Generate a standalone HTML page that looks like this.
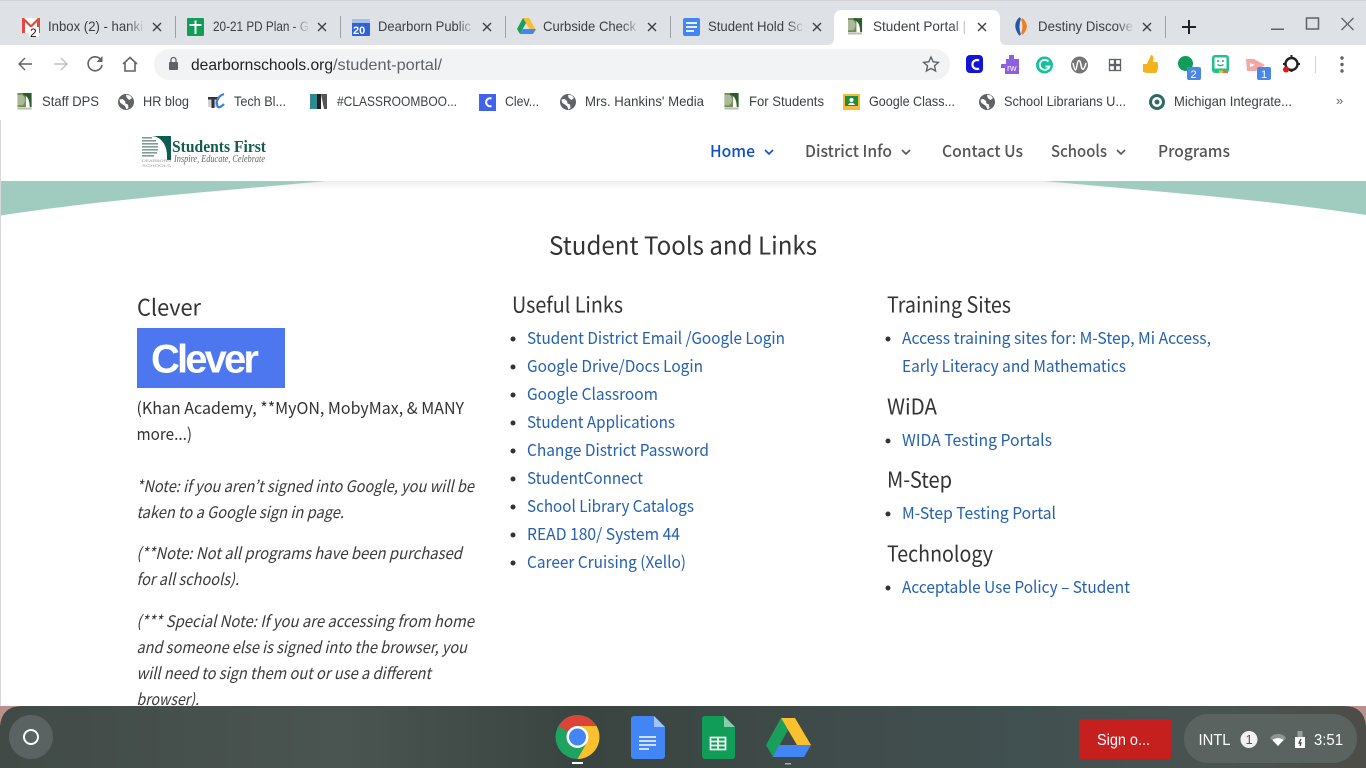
<!DOCTYPE html>
<html lang="en"><head><meta charset="utf-8"><title>Student Portal</title>
<style>
html,body{margin:0;padding:0;width:1366px;height:768px;overflow:hidden;background:#fff}
svg{display:block}
text{white-space:pre}
.ui{font-family:"Liberation Sans",sans-serif;font-size:14px;fill:#3c4043}
.pg{font-family:"Noto Sans CJK JP","Liberation Sans",sans-serif;font-size:16.5px;fill:#333}
.lk{fill:#2561ad}
.it{font-style:italic;font-size:16px;fill:#3a3a3a}
.h{font-size:21.5px;fill:#333}
.nav{font-size:16.5px;font-weight:500;fill:#555}
</style></head><body>
<svg width="1366" height="768" viewBox="0 0 1366 768" xmlns="http://www.w3.org/2000/svg">
<defs>
<linearGradient id="fade"><stop offset="0" stop-color="#dee1e6" stop-opacity="0"/><stop offset="1" stop-color="#dee1e6"/></linearGradient>
<linearGradient id="fadew"><stop offset="0" stop-color="#fff" stop-opacity="0"/><stop offset="1" stop-color="#fff"/></linearGradient>
<linearGradient id="bar" x1="0" x2="1" y1="0" y2="0"><stop offset="0" stop-color="#414a46"/><stop offset=".25" stop-color="#4a5450"/><stop offset=".42" stop-color="#3a4440"/><stop offset=".6" stop-color="#3f4b4a"/><stop offset=".75" stop-color="#415050"/><stop offset=".9" stop-color="#4a5350"/><stop offset="1" stop-color="#4c4c48"/></linearGradient>
<linearGradient id="hs" x1="0" y1="0" x2="0" y2="1"><stop offset="0" stop-color="#000" stop-opacity=".07"/><stop offset="1" stop-color="#000" stop-opacity="0"/></linearGradient>
<symbol id="globe" viewBox="0 0 16 16"><circle cx="8" cy="8" r="8" fill="#5f6368"/><path d="M1.500 5.500 4.500 5 7 7 7.500 9.500 10 10.500 10.500 14 8.500 15.500 7 12 4 10 2 8.500ZM8 .8 12 1.500 14 4 11.500 6 10 5 8.500 3.500Z" fill="#fff"/></symbol>
<symbol id="dps" viewBox="0 0 16 18"><rect width="16" height="18" fill="#fff"/><rect x="0" y="0" width="9" height="15" fill="#6f9150"/><path d="M6 0h9v15h-2C13 8 11 3 6 2Z" fill="#2b5e2c"/><path d="M0 2h5c4 2 4 9 0 11H0Z" fill="#a9b99a"/><rect y="15.500" width="15" height="2" fill="#bbb"/></symbol>
<symbol id="x" viewBox="0 0 10 10"><path d="M1 1l8 8M9 1l-8 8" stroke="#3c4043" stroke-width="1.400" fill="none"/></symbol>
<symbol id="caret" viewBox="0 0 10 6"><path d="M1 1l4 4 4-4" stroke="#555" stroke-width="1.600" fill="none"/></symbol>
</defs>

<!-- Tab strip -->
<rect width="1366" height="45" fill="#dee1e6"/>
<rect width="1366" height="1" fill="#d0d2d6"/>
<path d="M827 45c5 0 7-2 7-7V18c0-5 3-8 8-8h150c5 0 8 3 8 8v20c0 5 2 7 7 7Z" fill="#fff"/>
<g fill="#9aa0a6"><rect x="175" y="16" width="1" height="22"/><rect x="340" y="16" width="1" height="22"/><rect x="505" y="16" width="1" height="22"/><rect x="670" y="16" width="1" height="22"/><rect x="1165" y="16" width="1" height="22"/></g>

<text class="ui" x="48" y="31" textLength="95" lengthAdjust="spacingAndGlyphs">Inbox (2) - hanki</text>
<text class="ui" x="213" y="31" textLength="96" lengthAdjust="spacingAndGlyphs">20-21 PD Plan - G</text>
<text class="ui" x="378" y="31" textLength="93" lengthAdjust="spacingAndGlyphs">Dearborn Public</text>
<text class="ui" x="543" y="31" textLength="93" lengthAdjust="spacingAndGlyphs">Curbside Check</text>
<text class="ui" x="708" y="31" textLength="95" lengthAdjust="spacingAndGlyphs">Student Hold Sc</text>
<text class="ui" x="873" y="31" textLength="93" lengthAdjust="spacingAndGlyphs">Student Portal |</text>
<text class="ui" x="1038" y="31" textLength="95" lengthAdjust="spacingAndGlyphs">Destiny Discove</text>
<rect x="127" y="15" width="18" height="22" fill="url(#fade)"/><rect x="292" y="15" width="18" height="22" fill="url(#fade)"/><rect x="457" y="15" width="18" height="22" fill="url(#fade)"/><rect x="622" y="15" width="18" height="22" fill="url(#fade)"/><rect x="787" y="15" width="18" height="22" fill="url(#fade)"/><rect x="952" y="15" width="18" height="22" fill="url(#fadew)"/><rect x="1117" y="15" width="18" height="22" fill="url(#fade)"/>
<g><use href="#x" x="152" y="22" width="10" height="10"/><use href="#x" x="317" y="22" width="10" height="10"/><use href="#x" x="482" y="22" width="10" height="10"/><use href="#x" x="647" y="22" width="10" height="10"/><use href="#x" x="812" y="22" width="10" height="10"/><use href="#x" x="977" y="22" width="10" height="10"/><use href="#x" x="1142" y="22" width="10" height="10"/></g>

<!-- tab favicons -->
<rect x="22" y="18" width="18" height="15" fill="#e04a3f"/><path d="M25 33V22l6 6 6-6v11Z" fill="#fff"/><path d="M24 18l7 7 7-7Z" fill="#fff"/><path d="M22 18l9 9 9-9h-2l-7 7-7-7Z" fill="#e04a3f"/>
<rect x="29" y="27" width="10" height="10" fill="#fff"/><text x="30" y="37" font-family="Liberation Sans" font-size="12" fill="#111">2</text>
<rect x="187" y="18" width="17" height="18" rx="1" fill="#0f9d58"/><path d="M195.500 20.500v13.500M189.500 25h12" stroke="#fff" stroke-width="2"/>
<rect x="352" y="19" width="18" height="17" rx="1" fill="#2f62d9"/><rect x="352" y="19" width="18" height="4" fill="#a9bfe8"/><text x="353" y="34" font-family="Liberation Sans" font-size="11" font-weight="700" fill="#fff">20</text>
<path d="M523 18h6l7 12h-6Z" fill="#f5bd2f"/><path d="M523 18l-6 11 3 5 6-11Z" fill="#1a9e5b"/><path d="M520 34h13l3-5h-13Z" fill="#4285f4"/>
<rect x="683" y="18" width="17" height="18" rx="2" fill="#4285f4"/><path d="M686 23h11M686 27h11M686 31h8" stroke="#fff" stroke-width="1.800"/>
<use href="#dps" x="848" y="18" width="15" height="17"/>
<path d="M1020 18c-5 5-5 10 0 17-2-5-2-11 0-17Z" fill="#2456a6" stroke="#2456a6" stroke-width="2"/><path d="M1022 19c5 5 5 10 0 15 2-5 2-10 0-15Z" fill="#ef7d1a" stroke="#ef7d1a" stroke-width="2"/>

<!-- plus / window controls -->
<path d="M1189 20v14M1182 27h14" stroke="#222" stroke-width="2"/>
<rect x="1271" y="28.500" width="13" height="1.500" fill="#5f6368"/>
<rect x="1306.500" y="18" width="12" height="11" fill="none" stroke="#5f6368" stroke-width="1.500"/>
<path d="M1341.500 18l12 12M1353.500 18l-12 12" stroke="#5f6368" stroke-width="1.300"/>

<!-- toolbar -->
<rect y="45" width="1366" height="75" fill="#fff"/>
<path d="M32 64H19M25 58l-6 6 6 6" stroke="#5f6368" stroke-width="1.400" fill="none"/>
<path d="M67 64H54M61 58l6 6-6 6" stroke="#bdc1c6" stroke-width="1.400" fill="none"/>
<path d="M101 60a7 7 0 1 0 1 5" stroke="#5f6368" stroke-width="1.600" fill="none"/><path d="M102.500 56v6h-6Z" fill="#5f6368"/>
<path d="M123 64l7-6.500 7 6.500M125 63v8h10v-8" stroke="#5f6368" stroke-width="1.600" fill="none"/>
<rect x="154" y="49" width="796" height="31" rx="15.500" fill="#f1f3f4"/>
<rect x="169" y="62" width="9" height="8" rx="1" fill="#5f6368"/><path d="M171 62v-2a2.500 2.500 0 0 1 5 0v2" stroke="#5f6368" stroke-width="1.300" fill="none"/>
<text x="191" y="70" font-family="Liberation Sans" font-size="16" fill="#202124" textLength="142" lengthAdjust="spacingAndGlyphs">dearbornschools.org</text>
<text x="333" y="70" font-family="Liberation Sans" font-size="16" fill="#5f6368" textLength="109" lengthAdjust="spacingAndGlyphs">/student-portal/</text>
<path d="M931 57l2.200 4.800 5.200.6-3.900 3.500 1.100 5.100-4.600-2.600-4.600 2.600 1.100-5.100-3.900-3.500 5.200-.6Z" fill="none" stroke="#5f6368" stroke-width="1.400"/>

<!-- extensions -->
<rect x="966" y="55" width="17" height="18" rx="4" fill="#1414d8"/><path d="M979 60.500a4.500 4.500 0 1 0 0 8" stroke="#fff" stroke-width="2.200" fill="none"/>
<path d="M1006 59h3v-4h5v4h5v15h-14v-6h-4v-4h5Z" fill="#8e5fe0"/><text x="1007" y="71" font-family="Liberation Sans" font-size="9" fill="#fff">rw</text>
<circle cx="1044.500" cy="65" r="8.500" fill="#15c39a"/><path d="M1048.500 61.500a5 5 0 1 0 1 5h-4" stroke="#fff" stroke-width="1.800" fill="none"/>
<circle cx="1079.500" cy="65" r="8.500" fill="#757575"/><path d="M1073 63c2 10 3 8 4 2s3-6 4 0 3 6 5-2" stroke="#fff" stroke-width="1.500" fill="none"/>
<g fill="none" stroke="#5f6368" stroke-width="1.300"><rect x="1109.500" y="59.500" width="5" height="5"/><rect x="1115.500" y="59.500" width="5" height="5"/><rect x="1109.500" y="65.500" width="5" height="5"/><rect x="1115.500" y="65.500" width="5" height="5"/></g>
<path d="M1143 64h4l4-9c3 0 3 4 2 7h4c2 1 1 10-1 11h-9l-4-1Z" fill="#f5b21f"/>
<circle cx="1185.500" cy="63.500" r="7.500" fill="#0f9d58"/><rect x="1187" y="67" width="14" height="13" rx="2" fill="#4a86e8"/><text x="1190.500" y="78" font-family="Liberation Sans" font-size="11" fill="#fff">2</text>
<rect x="1212" y="55" width="17" height="18" rx="3" fill="#1ec28b"/><rect x="1214.500" y="57.500" width="12" height="11" fill="#fff"/><circle cx="1218" cy="61" r="1" fill="#1a8"/><circle cx="1223" cy="61" r="1" fill="#1a8"/><path d="M1217.500 64.500c2 1.500 4 1.500 6 0" stroke="#1a8" stroke-width="1.300" fill="none"/><rect x="1219" y="70.500" width="4" height="2.500" fill="#f5bd2f"/><rect x="1223" y="70.500" width="5" height="2.500" fill="#ef6c3a"/>
<path d="M1246 59h8l11 6-9 6h-9Z" fill="#f4a7a7"/><path d="M1250 63l5 2-5 2Z" fill="#fff"/><rect x="1257" y="67" width="14" height="13" rx="2" fill="#4a86e8"/><text x="1261" y="78" font-family="Liberation Sans" font-size="11" fill="#fff">1</text>
<circle cx="1291.500" cy="64" r="6" fill="none" stroke="#222" stroke-width="2.400"/><path d="M1291.500 55v4M1291.500 69v3M1283 64h3M1297 64h3" stroke="#222" stroke-width="2"/><circle cx="1286" cy="69.500" r="3" fill="#ee1111"/>
<rect x="1315" y="56" width="1" height="17" fill="#d0d2d6"/>
<g fill="#5f6368"><circle cx="1342" cy="58" r="1.700"/><circle cx="1342" cy="64.500" r="1.700"/><circle cx="1342" cy="71" r="1.700"/></g>

<!-- bookmarks -->
<g>
<use href="#dps" x="17" y="93" width="16" height="17"/>
<text class="ui" x="42" y="106" textLength="57" lengthAdjust="spacingAndGlyphs">Staff DPS</text>
<use href="#globe" x="118" y="94" width="16" height="16"/>
<text class="ui" x="143" y="106" textLength="46" lengthAdjust="spacingAndGlyphs">HR blog</text>
<rect x="208" y="97" width="10" height="10" fill="#cfd2d6"/><path d="M208 97h10v2.500h-3.500V108h-3V99.500H208Z" fill="#333"/><path d="M224 94c-6 2-9 8-6 13 2 1 4-1 6-3" fill="none" stroke="#3f7fdc" stroke-width="2.200"/>
<text class="ui" x="234" y="106" textLength="52" lengthAdjust="spacingAndGlyphs">Tech Bl...</text>
<rect x="310" y="94" width="7" height="15" fill="#2f8a90"/><rect x="317" y="94" width="4" height="15" fill="#222"/><path d="M321 94l3 15h3V94Z" fill="#555"/>
<text class="ui" x="337" y="106" textLength="120" lengthAdjust="spacingAndGlyphs">#CLASSROOMBOO...</text>
<rect x="479" y="94" width="17" height="17" fill="#4264ea"/><path d="M491.500 98.500a4 4 0 1 0 0 7.500" stroke="#fff" stroke-width="2" fill="none"/>
<text class="ui" x="505" y="106" textLength="34" lengthAdjust="spacingAndGlyphs">Clev...</text>
<use href="#globe" x="560" y="94" width="16" height="16"/>
<text class="ui" x="585" y="106" textLength="119" lengthAdjust="spacingAndGlyphs">Mrs. Hankins' Media</text>
<use href="#dps" x="724" y="93" width="16" height="17"/>
<text class="ui" x="749" y="106" textLength="75" lengthAdjust="spacingAndGlyphs">For Students</text>
<rect x="843" y="94" width="17" height="16" fill="#f5bd2f"/><rect x="845" y="96" width="13" height="10" fill="#1e8e3e"/><circle cx="851.500" cy="100" r="2" fill="#fff"/><path d="M848 105c1-3 6-3 7 0Z" fill="#fff"/>
<text class="ui" x="869" y="106" textLength="86" lengthAdjust="spacingAndGlyphs">Google Class...</text>
<use href="#globe" x="979" y="94" width="16" height="16"/>
<text class="ui" x="1004" y="106" textLength="122" lengthAdjust="spacingAndGlyphs">School Librarians U...</text>
<circle cx="1157" cy="102" r="6.500" fill="none" stroke="#2f6b66" stroke-width="3"/><circle cx="1157" cy="102" r="2.500" fill="#2f6b66"/>
<text class="ui" x="1174" y="106" textLength="118" lengthAdjust="spacingAndGlyphs">Michigan Integrate...</text>
<text x="1336" y="105" font-family="Liberation Sans" font-size="13" fill="#5f6368">»</text>
</g>

<!-- page -->
<rect x="0" y="120" width="1" height="590" fill="#d8d8d8"/>
<rect x="1" y="181" width="1365" height="9" fill="url(#hs)"/>
<path d="M1 181H326C210 192 100 200 1 215.500Z" fill="#a0ccc0"/>
<path d="M1366 181H1044C1160 192 1270 200 1366 215Z" fill="#a0ccc0"/>

<!-- logo -->
<rect x="142" y="136" width="29" height="24" fill="#0e5c50"/>
<path d="M142 136h9c10 0 16 9 16 20v4h-25Z" fill="#fff"/>
<g fill="#7f9c95"><rect x="142" y="137" width="10" height="1.600"/><rect x="142" y="140" width="14" height="1.600"/><rect x="142" y="143" width="16" height="1.600"/><rect x="142" y="146" width="16" height="1.600"/><rect x="142" y="149" width="16" height="1.600"/><rect x="142" y="152" width="15" height="1.600"/><rect x="142" y="155" width="12" height="1.600"/></g>
<text x="142" y="162" font-family="Liberation Sans" font-size="4" fill="#999" textLength="29" lengthAdjust="spacingAndGlyphs">DEARBORN</text>
<text x="142" y="167" font-family="Liberation Sans" font-size="4" fill="#999" textLength="29" lengthAdjust="spacingAndGlyphs">SCHOOLS</text>
<text x="172" y="152" font-family="Liberation Serif" font-size="17" font-weight="700" fill="#135c50" textLength="94" lengthAdjust="spacingAndGlyphs">Students First</text>
<text x="174" y="162" font-family="Liberation Serif" font-size="10" font-style="italic" fill="#666" textLength="91" lengthAdjust="spacingAndGlyphs">Inspire, Educate, Celebrate</text>

<!-- nav -->
<text class="pg nav" x="710" y="157" textLength="45" lengthAdjust="spacingAndGlyphs" style="fill:#0f4fc9">Home</text>
<path d="M765 150l4 4 4-4" stroke="#0f4fc9" stroke-width="1.600" fill="none"/>
<text class="pg nav" x="805" y="157" textLength="87" lengthAdjust="spacingAndGlyphs">District Info</text>
<use href="#caret" x="901" y="149" width="10" height="6"/>
<text class="pg nav" x="942" y="157" textLength="81" lengthAdjust="spacingAndGlyphs">Contact Us</text>
<text class="pg nav" x="1051" y="157" textLength="56" lengthAdjust="spacingAndGlyphs">Schools</text>
<use href="#caret" x="1116" y="149" width="10" height="6"/>
<text class="pg nav" x="1158" y="157" textLength="72" lengthAdjust="spacingAndGlyphs">Programs</text>

<!-- content -->
<text class="pg" x="549" y="254.500" style="font-size:24.500px" textLength="268" lengthAdjust="spacingAndGlyphs">Student Tools and Links</text>

<text class="pg h" x="137" y="315.500" style="font-size:22.500px" textLength="64" lengthAdjust="spacingAndGlyphs">Clever</text>
<rect x="137" y="328" width="148" height="60" fill="#4c77ef"/>
<text x="151" y="372.500" font-family="Liberation Sans" font-size="40" font-weight="700" fill="#fff" textLength="108" lengthAdjust="spacing">Clever</text>
<text class="pg" x="136.500" y="414" textLength="327.500" lengthAdjust="spacingAndGlyphs">(Khan Academy, **MyON, MobyMax, &amp; MANY</text>
<text class="pg" x="136.500" y="440" textLength="55.500" lengthAdjust="spacingAndGlyphs">more...)</text>
<text class="pg it" x="136.500" y="492" textLength="337.500" lengthAdjust="spacingAndGlyphs">*Note: if you aren’t signed into Google, you will be</text>
<text class="pg it" x="136.500" y="518" textLength="207.500" lengthAdjust="spacingAndGlyphs">taken to a Google sign in page.</text>
<text class="pg it" x="136.500" y="559" textLength="325.500" lengthAdjust="spacingAndGlyphs">(**Note: Not all programs have been purchased</text>
<text class="pg it" x="136.500" y="585" textLength="102.500" lengthAdjust="spacingAndGlyphs">for all schools).</text>
<text class="pg it" x="136.500" y="627" textLength="337.500" lengthAdjust="spacingAndGlyphs">(*** Special Note: If you are accessing from home</text>
<text class="pg it" x="136.500" y="653" textLength="330.500" lengthAdjust="spacingAndGlyphs">and someone else is signed into the browser, you</text>
<text class="pg it" x="136.500" y="679" textLength="294.500" lengthAdjust="spacingAndGlyphs">will need to sign them out or use a different</text>
<text class="pg it" x="136.500" y="705" textLength="62.500" lengthAdjust="spacingAndGlyphs">browser).</text>

<text class="pg h" x="512" y="312.500" textLength="111" lengthAdjust="spacingAndGlyphs">Useful Links</text>
<g fill="#333"><circle cx="513" cy="339" r="2.500"/><circle cx="513" cy="367" r="2.500"/><circle cx="513" cy="395" r="2.500"/><circle cx="513" cy="423" r="2.500"/><circle cx="513" cy="451" r="2.500"/><circle cx="513" cy="479" r="2.500"/><circle cx="513" cy="507" r="2.500"/><circle cx="513" cy="535" r="2.500"/><circle cx="513" cy="563" r="2.500"/>
<circle cx="888" cy="339" r="2.500"/><circle cx="888" cy="441" r="2.500"/><circle cx="888" cy="514" r="2.500"/><circle cx="888" cy="588" r="2.500"/></g>
<text class="pg lk" x="527" y="344" textLength="258" lengthAdjust="spacingAndGlyphs">Student District Email /Google Login</text>
<text class="pg lk" x="527" y="372" textLength="176" lengthAdjust="spacingAndGlyphs">Google Drive/Docs Login</text>
<text class="pg lk" x="527" y="400" textLength="131" lengthAdjust="spacingAndGlyphs">Google Classroom</text>
<text class="pg lk" x="527" y="428" textLength="148" lengthAdjust="spacingAndGlyphs">Student Applications</text>
<text class="pg lk" x="527" y="456" textLength="182" lengthAdjust="spacingAndGlyphs">Change District Password</text>
<text class="pg lk" x="527" y="484" textLength="116" lengthAdjust="spacingAndGlyphs">StudentConnect</text>
<text class="pg lk" x="527" y="512" textLength="167" lengthAdjust="spacingAndGlyphs">School Library Catalogs</text>
<text class="pg lk" x="527" y="540" textLength="153" lengthAdjust="spacingAndGlyphs">READ 180/ System 44</text>
<text class="pg lk" x="527" y="568" textLength="159" lengthAdjust="spacingAndGlyphs">Career Cruising (Xello)</text>

<text class="pg h" x="887" y="312.500" textLength="124" lengthAdjust="spacingAndGlyphs">Training Sites</text>
<text class="pg lk" x="902" y="344" textLength="309" lengthAdjust="spacingAndGlyphs">Access training sites for: M-Step, Mi Access,</text>
<text class="pg lk" x="902" y="372" textLength="224" lengthAdjust="spacingAndGlyphs">Early Literacy and Mathematics</text>
<text class="pg h" x="887" y="414.500" textLength="50" lengthAdjust="spacingAndGlyphs">WiDA</text>
<text class="pg lk" x="902" y="446" textLength="150" lengthAdjust="spacingAndGlyphs">WIDA Testing Portals</text>
<text class="pg h" x="887" y="487.500" textLength="65" lengthAdjust="spacingAndGlyphs">M-Step</text>
<text class="pg lk" x="902" y="519" textLength="154" lengthAdjust="spacingAndGlyphs">M-Step Testing Portal</text>
<text class="pg h" x="887" y="561.500" textLength="106" lengthAdjust="spacingAndGlyphs">Technology</text>
<text class="pg lk" x="902" y="593" textLength="228" lengthAdjust="spacingAndGlyphs">Acceptable Use Policy – Student</text>

<!-- shelf -->
<rect y="706" width="1366" height="62" fill="#b9918a"/>
<path d="M0 768V726Q2 706 22 706H1344Q1364 706 1366 726V768Z" fill="url(#bar)"/>
<circle cx="31" cy="737" r="22" fill="#5a6361"/>
<circle cx="31" cy="737" r="7" fill="none" stroke="#fff" stroke-width="2"/>

<!-- chrome -->
<circle cx="577.500" cy="737" r="22" fill="#1ea362"/>
<path d="M558.500 726A22 22 0 0 1 596.500 726H577.500A11 11 0 0 0 568 731.500Z" fill="#db4437"/>
<path d="M596.500 726A22 22 0 0 1 577.500 759L587 742.500A11 11 0 0 0 587 731.500 11 11 0 0 0 577.500 726Z" fill="#fbc02d"/>
<circle cx="577.500" cy="737" r="11" fill="#fff"/><circle cx="577.500" cy="737" r="8.500" fill="#4285f4"/>
<rect x="572" y="762" width="11" height="2" fill="#fff"/>

<!-- docs -->
<path d="M634 716h20l11 11v29a3 3 0 0 1-3 3h-28a3 3 0 0 1-3-3v-37a3 3 0 0 1 3-3Z" fill="#4285f4"/>
<path d="M654 716l11 11h-11Z" fill="#a1c2fa"/>
<path d="M639 737h17M639 741h17M639 745h17M639 749h10" stroke="#fff" stroke-width="1.500"/>

<!-- sheets -->
<path d="M705 716h19l11 11v29a3 3 0 0 1-3 3h-27a3 3 0 0 1-3-3v-37a3 3 0 0 1 3-3Z" fill="#0f9d58"/>
<path d="M724 716l11 11h-11Z" fill="#87ceac"/>
<path d="M710.500 737.500h15v12h-15ZM710.500 741.500h15M710.500 745.500h15M718 737.500v12" fill="none" stroke="#f1f1f1" stroke-width="1.800"/>

<!-- drive -->
<path d="M781 718h14l16 27h-14Z" fill="#fbc02d"/>
<path d="M781 718l-15 27 7 12 15-27Z" fill="#1a9e5b"/>
<path d="M773 757h31l7-12h-32Z" fill="#4285f4"/>
<rect x="785" y="763" width="6" height="1.500" fill="#aaa"/>

<!-- sign out -->
<rect x="1079" y="719" width="92" height="40" rx="2" fill="#c5201e"/>
<text x="1097" y="745" font-family="Liberation Sans" font-size="16" fill="#fff" textLength="53" lengthAdjust="spacingAndGlyphs">Sign o...</text>

<!-- tray -->
<rect x="1184" y="714" width="173" height="49" rx="24" fill="#5a6360"/>
<text x="1198.500" y="745" font-family="Liberation Sans" font-size="15.500" fill="#fff" textLength="32" lengthAdjust="spacingAndGlyphs">INTL</text>
<circle cx="1249" cy="739.500" r="8.500" fill="#f1f1f1"/><text x="1245.500" y="744" font-family="Liberation Sans" font-size="13" fill="#555">1</text>
<path d="M1270 738c4-5.500 12-5.500 16 0l-8 8Z" fill="#8d9592"/><path d="M1272.500 740c3-2.500 8-2.500 11 0l-5.500 6Z" fill="#fff"/>
<rect x="1295" y="737" width="10" height="11" fill="#fff"/><rect x="1297.500" y="731" width="5" height="6" fill="#9aa0a0"/><path d="M1301 739l-2 4h2l-1 3" stroke="#333" stroke-width="1.200" fill="none"/>
<text x="1314" y="745" font-family="Liberation Sans" font-size="15.500" fill="#fff" textLength="29" lengthAdjust="spacingAndGlyphs">3:51</text>
</svg>
</body></html>
